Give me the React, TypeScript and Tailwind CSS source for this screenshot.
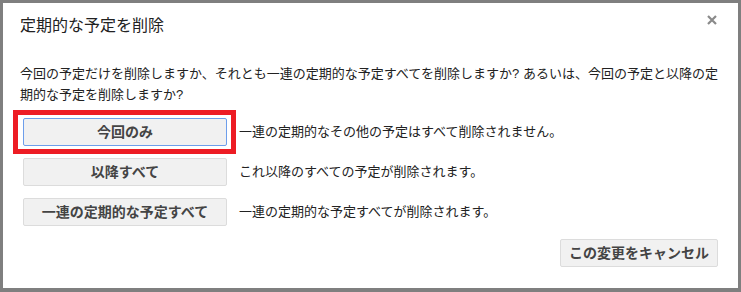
const FONT = "font-['Liberation_Sans','Noto_Sans_CJK_JP',sans-serif]";

function Btn({
  children,
  selected,
  className = "",
}: {
  children: React.ReactNode;
  selected?: boolean;
  className?: string;
}) {
  return (
    <button
      className={`flex h-[28px] items-center justify-center rounded-[2px] border bg-[#f1f1f1] text-[14px] font-bold text-[#444] ${
        selected ? "border-[#6d9eeb]" : "border-[#dcdcdc]"
      } ${className}`}
    >
      {children}
    </button>
  );
}

function Row({
  label,
  text,
  selected,
}: {
  label: string;
  text: string;
  selected?: boolean;
}) {
  return (
    <div className="flex items-center">
      <div className="relative">
        <Btn selected={selected} className="w-[204px]">
          {label}
        </Btn>
        {selected && (
          <span className="pointer-events-none absolute -top-[8px] -bottom-[8px] -left-[10px] -right-[9px] border-[5px] border-[#ed1c24]" />
        )}
      </div>
      <span className="ml-[12px] text-[13px] text-[#222]">{text}</span>
    </div>
  );
}

export default function App() {
  return (
    <div className={`h-[292px] w-[741px] bg-[#7f7f7f] pt-[3px] pr-[3px] pb-[4px] pl-[3px] ${FONT}`}>
      <div className="relative flex h-full flex-col bg-white pl-[17px] pr-[20px] pt-[11px]">
        <button className="absolute right-[21px] top-[12px] text-[#8a8a8a]" aria-label="閉じる">
          <svg width="10" height="10" viewBox="0 0 10 10">
            <path d="M1 1L9 9M9 1L1 9" stroke="currentColor" strokeWidth="2.2" />
          </svg>
        </button>

        <h1 className="text-[16px] leading-[24px] text-[#222]">定期的な予定を削除</h1>

        <p className="mt-[25px] text-[13px] leading-[21px] text-[#222]">
          今回の予定だけを削除しますか、それとも一連の定期的な予定すべてを削除しますか? あるいは、今回の予定と以降の定
          <br />
          期的な予定を削除しますか?
        </p>

        <div className="mt-[13px] flex flex-col gap-[12px] pl-[3px]">
          <Row
            selected
            label="今回のみ"
            text="一連の定期的なその他の予定はすべて削除されません。"
          />
          <Row label="以降すべて" text="これ以降のすべての予定が削除されます。" />
          <Row
            label="一連の定期的な予定すべて"
            text="一連の定期的な予定すべてが削除されます。"
          />
        </div>

        <div className="mt-[13px] flex justify-end">
          <Btn className="w-[158px]">この変更をキャンセル</Btn>
        </div>
      </div>
    </div>
  );
}
